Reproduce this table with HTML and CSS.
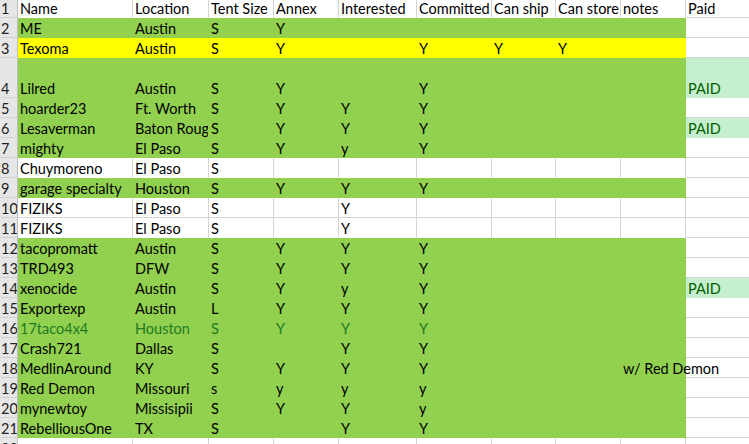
FILE: index.html
```html
<!DOCTYPE html>
<html>
<head>
<meta charset="utf-8">
<link rel="stylesheet" href="styles.css">
</head>
<body>
<div class="sheet">
  <div class="row head nb"><div class="rh">1</div><div class="c">Name</div><div class="c">Location</div><div class="c">Tent Size</div><div class="c">Annex</div><div class="c">Interested</div><div class="c">Committed</div><div class="c">Can ship</div><div class="c">Can store</div><div class="c">notes</div><div class="c p">Paid</div></div>
  <div class="row g"><div class="rh">2</div><div class="c">ME</div><div class="c">Austin</div><div class="c">S</div><div class="c">Y</div><div class="c"></div><div class="c"></div><div class="c"></div><div class="c"></div><div class="c"></div><div class="c p"></div></div>
  <div class="row yl"><div class="rh">3</div><div class="c">Texoma</div><div class="c">Austin</div><div class="c">S</div><div class="c">Y</div><div class="c"></div><div class="c">Y</div><div class="c">Y</div><div class="c">Y</div><div class="c"></div><div class="c p"></div></div>
  <div class="row g tall"><div class="rh">4</div><div class="c">Lilred</div><div class="c">Austin</div><div class="c">S</div><div class="c">Y</div><div class="c"></div><div class="c">Y</div><div class="c"></div><div class="c"></div><div class="c"></div><div class="c p paid">PAID</div></div>
  <div class="row g"><div class="rh">5</div><div class="c">hoarder23</div><div class="c">Ft. Worth</div><div class="c">S</div><div class="c">Y</div><div class="c">Y</div><div class="c">Y</div><div class="c"></div><div class="c"></div><div class="c"></div><div class="c p"></div></div>
  <div class="row g"><div class="rh">6</div><div class="c">Lesaverman</div><div class="c">Baton Rouge</div><div class="c">S</div><div class="c">Y</div><div class="c">Y</div><div class="c">Y</div><div class="c"></div><div class="c"></div><div class="c"></div><div class="c p paid">PAID</div></div>
  <div class="row g"><div class="rh">7</div><div class="c">mighty</div><div class="c">El Paso</div><div class="c">S</div><div class="c">Y</div><div class="c">y</div><div class="c">Y</div><div class="c"></div><div class="c"></div><div class="c"></div><div class="c p"></div></div>
  <div class="row nb"><div class="rh">8</div><div class="c">Chuymoreno</div><div class="c">El Paso</div><div class="c">S</div><div class="c"></div><div class="c"></div><div class="c"></div><div class="c"></div><div class="c"></div><div class="c"></div><div class="c p"></div></div>
  <div class="row g"><div class="rh">9</div><div class="c">garage specialty</div><div class="c">Houston</div><div class="c">S</div><div class="c">Y</div><div class="c">Y</div><div class="c">Y</div><div class="c"></div><div class="c"></div><div class="c"></div><div class="c p"></div></div>
  <div class="row"><div class="rh">10</div><div class="c">FIZIKS</div><div class="c">El Paso</div><div class="c">S</div><div class="c"></div><div class="c">Y</div><div class="c"></div><div class="c"></div><div class="c"></div><div class="c"></div><div class="c p"></div></div>
  <div class="row nb"><div class="rh">11</div><div class="c">FIZIKS</div><div class="c">El Paso</div><div class="c">S</div><div class="c"></div><div class="c">Y</div><div class="c"></div><div class="c"></div><div class="c"></div><div class="c"></div><div class="c p"></div></div>
  <div class="row g"><div class="rh">12</div><div class="c">tacopromatt</div><div class="c">Austin</div><div class="c">S</div><div class="c">Y</div><div class="c">Y</div><div class="c">Y</div><div class="c"></div><div class="c"></div><div class="c"></div><div class="c p"></div></div>
  <div class="row g"><div class="rh">13</div><div class="c">TRD493</div><div class="c">DFW</div><div class="c">S</div><div class="c">Y</div><div class="c">Y</div><div class="c">Y</div><div class="c"></div><div class="c"></div><div class="c"></div><div class="c p"></div></div>
  <div class="row g"><div class="rh">14</div><div class="c">xenocide</div><div class="c">Austin</div><div class="c">S</div><div class="c">Y</div><div class="c">y</div><div class="c">Y</div><div class="c"></div><div class="c"></div><div class="c"></div><div class="c p paid">PAID</div></div>
  <div class="row g"><div class="rh">15</div><div class="c">Exportexp</div><div class="c">Austin</div><div class="c">L</div><div class="c">Y</div><div class="c">Y</div><div class="c">Y</div><div class="c"></div><div class="c"></div><div class="c"></div><div class="c p"></div></div>
  <div class="row g gt"><div class="rh">16</div><div class="c">17taco4x4</div><div class="c">Houston</div><div class="c">S</div><div class="c">Y</div><div class="c">Y</div><div class="c">Y</div><div class="c"></div><div class="c"></div><div class="c"></div><div class="c p"></div></div>
  <div class="row g"><div class="rh">17</div><div class="c">Crash721</div><div class="c">Dallas</div><div class="c">S</div><div class="c"></div><div class="c">Y</div><div class="c">Y</div><div class="c"></div><div class="c"></div><div class="c"></div><div class="c p"></div></div>
  <div class="row g"><div class="rh">18</div><div class="c">MedlinAround</div><div class="c">KY</div><div class="c">S</div><div class="c">Y</div><div class="c">Y</div><div class="c">Y</div><div class="c"></div><div class="c"></div><div class="c over">w/ Red Demon</div><div class="c p"></div></div>
  <div class="row g"><div class="rh">19</div><div class="c">Red Demon</div><div class="c">Missouri</div><div class="c">s</div><div class="c">y</div><div class="c">y</div><div class="c">y</div><div class="c"></div><div class="c"></div><div class="c"></div><div class="c p"></div></div>
  <div class="row g"><div class="rh">20</div><div class="c">mynewtoy</div><div class="c">Missisipii</div><div class="c">S</div><div class="c">Y</div><div class="c">Y</div><div class="c">y</div><div class="c"></div><div class="c"></div><div class="c"></div><div class="c p"></div></div>
  <div class="row g"><div class="rh">21</div><div class="c">RebelliousOne</div><div class="c">TX</div><div class="c">S</div><div class="c"></div><div class="c">Y</div><div class="c">Y</div><div class="c"></div><div class="c"></div><div class="c"></div><div class="c p"></div></div>
  <div class="row"><div class="rh">22</div><div class="c"></div><div class="c"></div><div class="c"></div><div class="c"></div><div class="c"></div><div class="c"></div><div class="c"></div><div class="c"></div><div class="c"></div><div class="c p"></div></div>
</div>
</body>
</html>
```

FILE: styles.css
```css
html, body {
  margin: 0;
  padding: 0;
  background: #ffffff;
  overflow: hidden;
}
body {
  width: 749px;
  height: 444px;
  font-family: Lato, "Liberation Sans", sans-serif;
  font-size: 14.5px;
  color: #000000;
}
.sheet {
  display: flex;
  flex-direction: column;
  width: 780px;
}
.row {
  display: grid;
  grid-template-columns: 18px 115px 76px 65px 65px 78px 75px 64px 65px 65px 80px;
  height: 20px;
}
.row.head {
  height: 18px;
}
.row.tall {
  height: 40px;
}
.rh, .c {
  box-sizing: border-box;
  display: flex;
  align-items: flex-end;
  white-space: nowrap;
  overflow: hidden;
  line-height: 17px;
  padding: 0 0 0 2px;
  border-right: 1px solid #d4d4d4;
  border-bottom: 1px solid #d4d4d4;
}
.rh {
  background: #e6e6e6;
  border-right-color: #bdbdbd;
  border-bottom-color: #d2d2d2;
  padding-left: 1px;
  color: #222222;
}
.c.p {
  background: transparent;
}
.nb .c:not(.p) {
  border-bottom-color: transparent;
}
.g .c:not(.p) {
  background: #92d050;
  border-color: #92d050;
}
.yl .c:not(.p) {
  background: #ffff00;
  border-color: #ffff00;
}
.gt .c {
  color: #1f7a1f;
}
.c.paid {
  background: #c6efce;
  border-color: #c6efce;
  color: #006100;
}
.c.over {
  overflow: visible;
}
```
